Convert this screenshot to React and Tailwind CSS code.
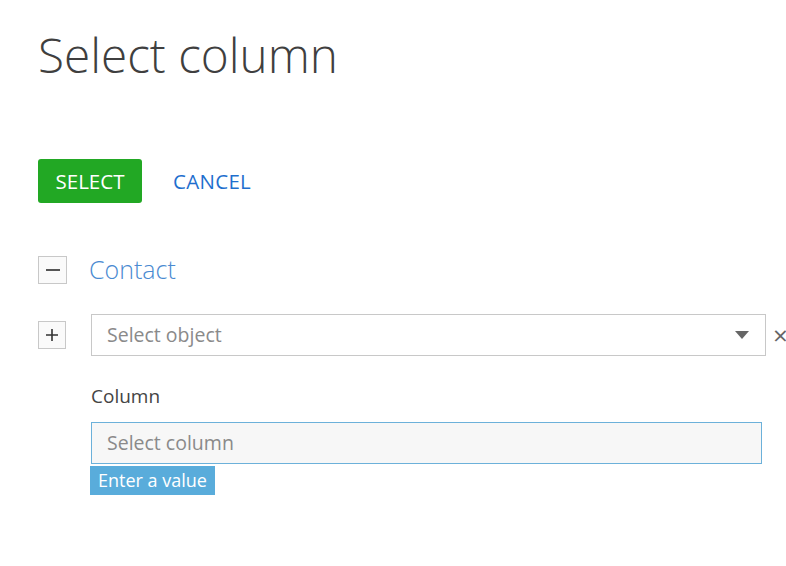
export default function App() {
  return (
    <div className="min-h-screen bg-white font-['Open_Sans','Liberation_Sans',sans-serif] overflow-hidden">
      <div className="pl-[38px] pt-[22px]">
        {/* 제목 */}
        <h1 className="text-[47.7px] font-light leading-[66px] text-[#3f3f3f]">Select column</h1>

        {/* 버튼 */}
        <div className="mt-[71px] flex items-center gap-[31px]">
          <button className="h-[44px] w-[104px] rounded-[3px] bg-[#22a824] text-[20.5px] text-white">SELECT</button>
          <button className="text-[20.5px] text-[#1f6fce] tracking-[0.3px]">CANCEL</button>
        </div>

        {/* 그룹 */}
        <div className="mt-[48px] flex items-center gap-[22px]">
          <div className="flex h-[28px] w-[29px] items-center justify-center border border-[#c8c8c8] bg-[#fafafa]">
            <div className="h-[2px] w-[14px] bg-[#555]" />
          </div>
          <span className="text-[25px] font-light text-[#4a8ad1]">Contact</span>
        </div>

        <div className="mt-[25px] flex items-center">
          <div className="flex h-[28px] w-[28px] shrink-0 items-center justify-center border border-[#c8c8c8] bg-[#fafafa]">
            <svg width="12" height="12" viewBox="0 0 12 12"><path d="M6 0v12M0 6h12" stroke="#333" strokeWidth="1.6" /></svg>
          </div>
          <div className="ml-[25px] flex h-[42px] w-[675px] shrink-0 items-center justify-between border border-[#c8c8c8] pl-[15px] pr-[16px]">
            <span className="text-[19.5px] text-[#8a8a8a]">Select object</span>
            <svg width="14" height="8" viewBox="0 0 14 8"><path d="M0 0h14L7 8z" fill="#666" /></svg>
          </div>
          <span className="ml-[7px] shrink-0 text-[26px] leading-none text-[#666]">×</span>
        </div>

        <div className="ml-[53px] mt-[26px]">
          <div className="text-[19px] text-[#444]">Column</div>
          <div className="mt-[12px] flex h-[42px] w-[671px] items-center border border-[#6cb1da] bg-[#f7f7f7] pl-[15px]">
            <span className="text-[19.5px] text-[#8a8a8a]">Select column</span>
          </div>
          <div className="-ml-px mt-[2px] inline-block bg-[#59acdb] px-[8px] text-[18px] leading-[29px] text-white">Enter a value</div>
        </div>
      </div>
    </div>
  );
}
